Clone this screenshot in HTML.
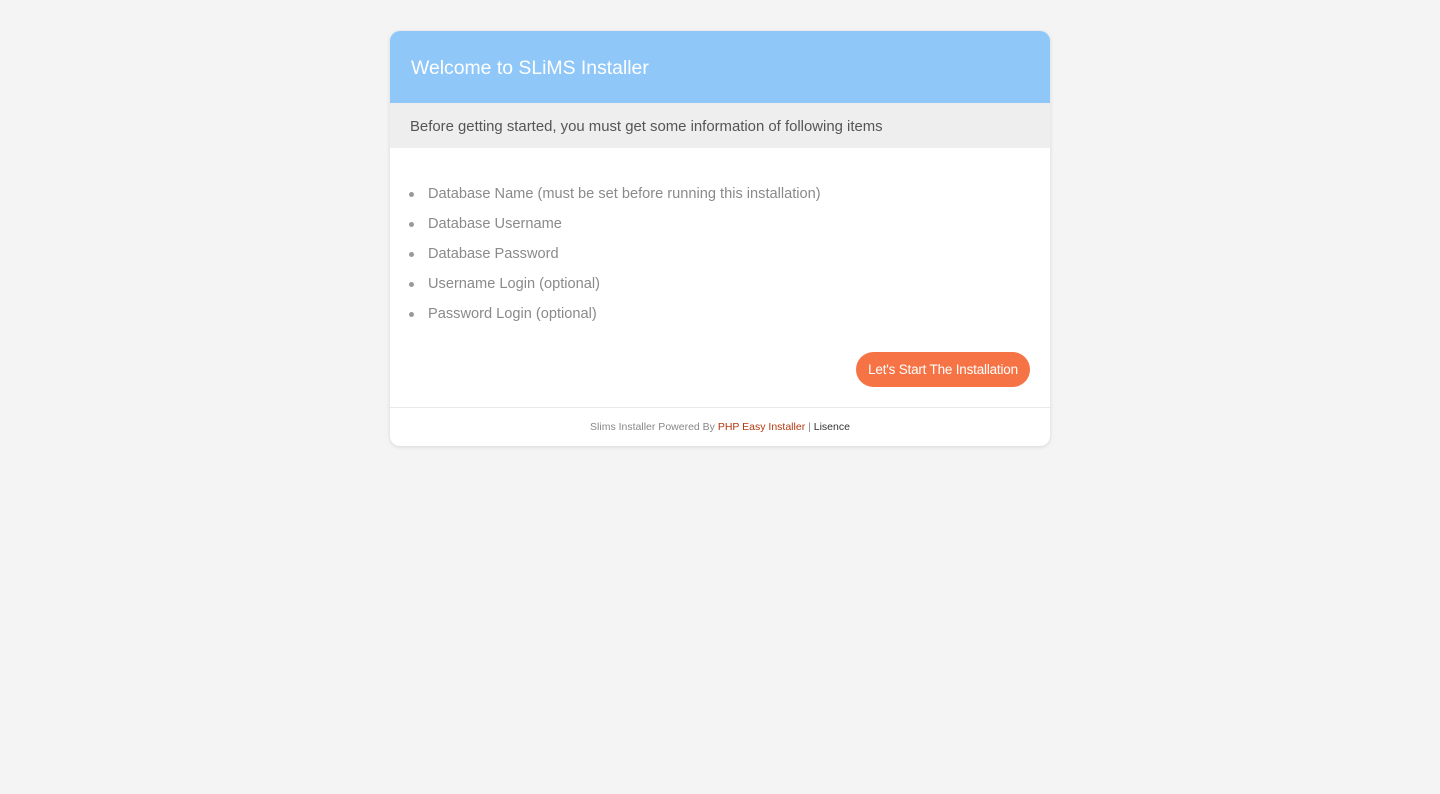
<!DOCTYPE html>
<html><head><style>
body{margin:0;background:#f4f4f4;font-family:"Liberation Sans",sans-serif;}
.card{position:absolute;left:390px;top:31px;width:660px;height:415px;background:#fff;border-radius:10px;box-shadow:0 1px 4px rgba(0,0,0,.12);overflow:hidden;}
.hd{height:72px;background:#8ec7f8;color:#fff;font-size:19.4px;line-height:74px;padding-left:21px;}
.sub{height:45px;background:#eeeeee;color:#555;font-size:14.9px;line-height:48px;padding-left:20px;}
ul{margin:0;padding:0;position:absolute;top:147px;left:0;list-style:none;}
li{position:absolute;left:38px;font-size:14.6px;color:#8a8a8a;white-space:nowrap;line-height:16px;}
li:before{content:"";position:absolute;left:-19px;top:6px;width:5px;height:5px;border-radius:50%;background:#999;}
.btn{position:absolute;left:466px;top:321px;width:174px;height:35px;border-radius:18px;background:#f67345;color:#fff;font-size:13.5px;line-height:35px;text-align:center;letter-spacing:-0.2px;}
.ft{position:absolute;top:376px;left:0;width:660px;border-top:1px solid #e8e8e8;height:39px;text-align:center;font-size:10.5px;line-height:38px;color:#888;}
.ft .a{color:#b2380e}.ft .b{color:#333}
</style></head><body>
<div class="card">
<div class="hd">Welcome to SLiMS Installer</div>
<div class="sub">Before getting started, you must get some information of following items</div>
<ul>
<li style="top:8px">Database Name (must be set before running this installation)</li>
<li style="top:38px">Database Username</li>
<li style="top:68px">Database Password</li>
<li style="top:98px">Username Login (optional)</li>
<li style="top:128px">Password Login (optional)</li>
</ul>
<div class="btn">Let's Start The Installation</div>
<div class="ft">Slims Installer Powered By <span class="a">PHP Easy Installer</span> | <span class="b">Lisence</span></div>
</div>
</body></html>
